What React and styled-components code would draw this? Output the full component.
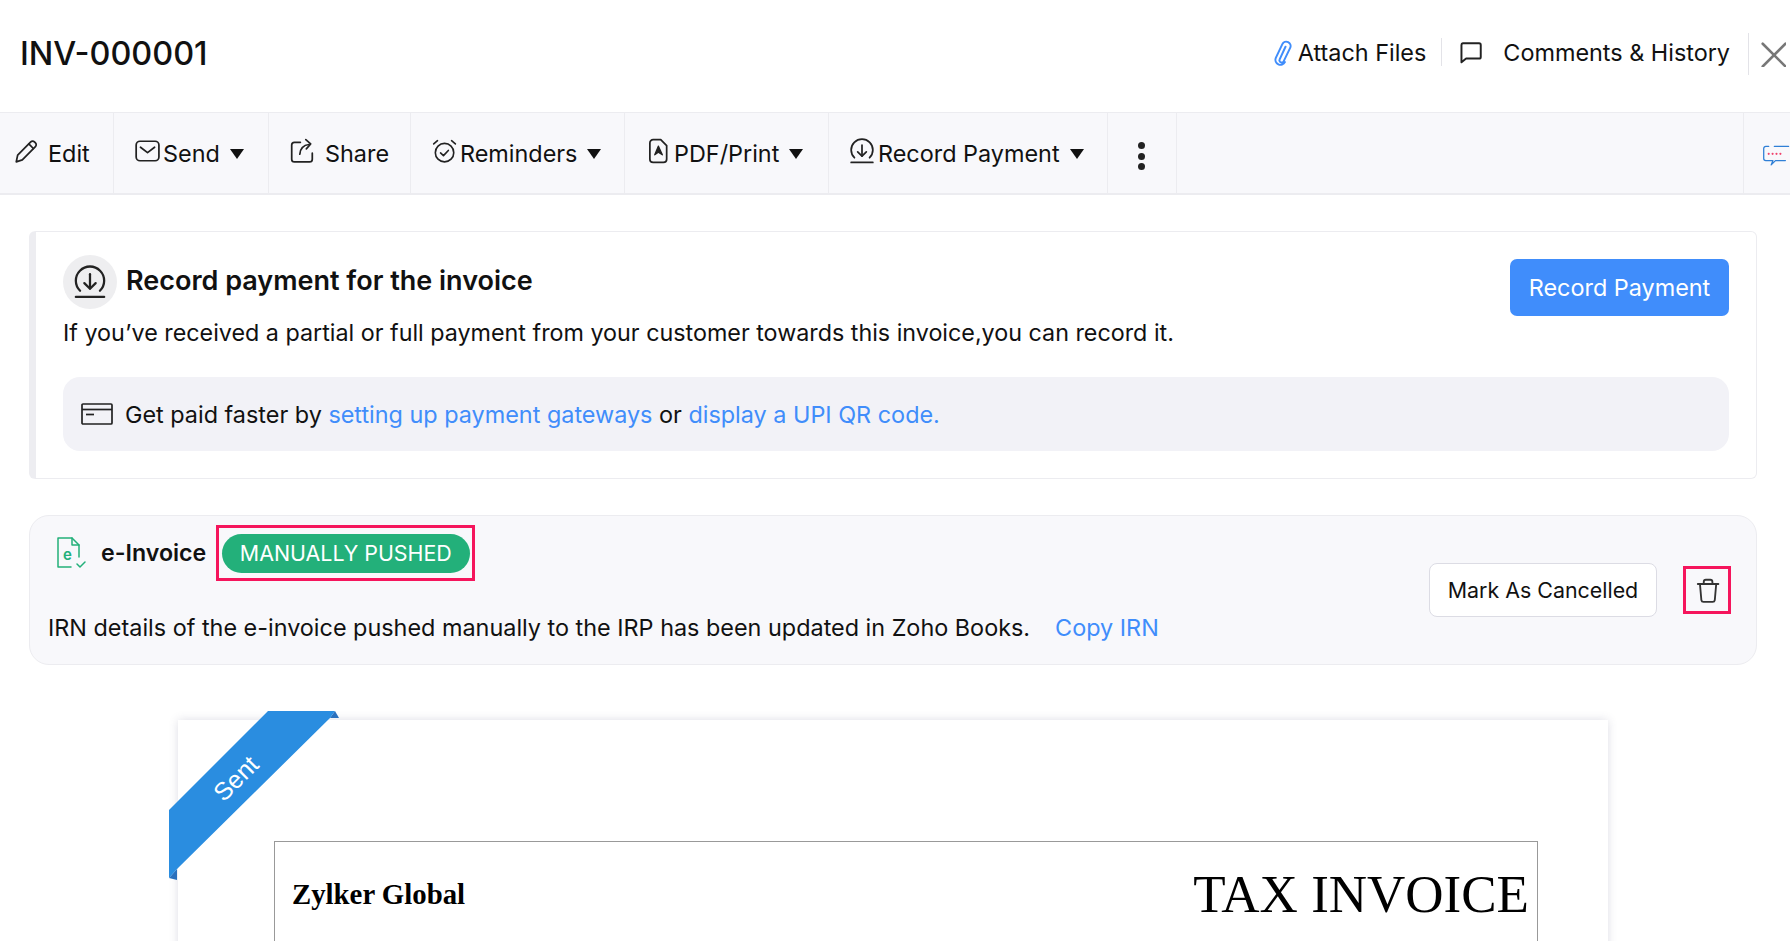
import React from "react";
import styled, { createGlobalStyle } from "styled-components";

const GlobalStyle = createGlobalStyle`
  html, body {
    margin: 0;
    padding: 0;
    background: #fff;
    overflow: hidden;
  }
  body {
    font-family: Inter, "Liberation Sans", sans-serif;
    color: #111;
  }
  * { box-sizing: border-box; }
`;

const Stroke = ({ size = 24, color = "#222", sw = 1.6, children, vb = "0 0 24 24" }) => (
  <svg width={size} height={size} viewBox={vb} fill="none" stroke={color} strokeWidth={sw} strokeLinecap="round" strokeLinejoin="round">
    {children}
  </svg>
);

const ClipIcon = () => (
  <Stroke size={28} color="#408dfb" sw={1.7}>
    <path d="M15 7.5l-5 10.800a1.900 1.900 0 0 0 3.400 1.700L19 8.500a3.700 3.700 0 0 0-6.700-3.200L6.700 17a4.300 4.300 0 0 0 7.800 3.600" />
  </Stroke>
);

const CommentIcon = () => (
  <Stroke size={26} color="#222" sw={1.8}>
    <path d="M4.500 4h15a1.500 1.500 0 0 1 1.500 1.500v11a1.500 1.500 0 0 1-1.500 1.500H7.500L3.200 21.500V5.500A1.500 1.500 0 0 1 4.500 4z" />
  </Stroke>
);

const CloseIcon = () => (
  <Stroke size={26} color="#777" sw={2.400}>
    <path d="M2.500 2.500l21 21" />
    <path d="M23.500 2.500l-21 21" />
  </Stroke>
);

const EditIcon = () => (
  <Stroke size={26}>
    <path d="M3 22l1.300-6.200L16.400 3.600a2.400 2.400 0 0 1 3.400 0l.9.900a2.400 2.400 0 0 1 0 3.400L8.600 20.200 3 22z" />
    <path d="M14.600 5.500l4.200 4.200" />
  </Stroke>
);

const MailIcon = () => (
  <Stroke size={26}>
    <rect x="2" y="3" width="21" height="18" rx="3.500" />
    <path d="M6 8.500l6.500 5 6.500-5" />
  </Stroke>
);

const ShareIcon = () => (
  <Stroke size={26}>
    <path d="M10.500 4H5a2.500 2.500 0 0 0-2.500 2.500v13A2.500 2.500 0 0 0 5 22h14a2.500 2.500 0 0 0 2.500-2.500V14" />
    <path d="M10 15c.4-5 3.500-8.500 8.500-9" />
    <path d="M15.500 1.500l4.500 4-4 4.500" />
  </Stroke>
);

const AlarmIcon = () => (
  <Stroke size={26} sw={1.500}>
    <circle cx="12.500" cy="13.500" r="8.500" />
    <path d="M8.800 13.800l2.700 2.500 4.500-4.800" />
    <path d="M2.500 5.500L6 2.500" />
    <path d="M22.500 5.500L19 2.500" />
  </Stroke>
);

const PdfIcon = () => (
  <Stroke size={26}>
    <path d="M7.500 1.500h7l5.500 5.500v12.500a3 3 0 0 1-3 3H7.500a3 3 0 0 1-3-3v-15a3 3 0 0 1 3-3z" />
    <path d="M12.300 7.500l-3.300 8 3.300-2.300 3.700 2.300z" fill="#222" strokeWidth="1.200" />
  </Stroke>
);

const DownloadIcon = ({ size = 26, sw = 1.600 }) => (
  <Stroke size={size} sw={sw}>
    <path d="M5 18.200a10 10 0 1 1 14 0" />
    <path d="M12 6.500v10" />
    <path d="M8 12.800l4 4 4-4" />
    <path d="M2 22.500h20" />
  </Stroke>
);

const ChatIcon = () => (
  <svg width="38" height="30" viewBox="0 0 38 30" fill="none" strokeLinecap="round" strokeLinejoin="round">
    <path d="M8 1.500H4a3 3 0 0 0-3 3v14a3 3 0 0 0 3 3h10l-2.500 6 6-6h14" stroke="#2f7fd6" strokeWidth="1.800" />
    <path d="M16 1.500h20" stroke="#2f7fd6" strokeWidth="1.800" />
    <circle cx="8" cy="12" r="1.500" fill="#f0416c" />
    <circle cx="13.500" cy="12" r="1.500" fill="#f0416c" />
    <circle cx="19" cy="12" r="1.500" fill="#f0416c" />
    <circle cx="24.500" cy="12" r="1.500" fill="#f0416c" />
  </svg>
);

const CardIcon = () => (
  <svg width="32" height="24" viewBox="0 0 32 24" fill="none" stroke="#222" strokeWidth="1.700">
    <rect x="1" y="2" width="30" height="20" rx="1" />
    <path d="M1 7.500h30" />
    <path d="M5 12.500h8" />
  </svg>
);

const EInvoiceIcon = () => (
  <svg width="32" height="34" viewBox="0 0 32 34" fill="none" stroke="#23b07a" strokeWidth="1.500" strokeLinecap="round" strokeLinejoin="round">
    <path d="M16 31H3V2h14l7 7v12" />
    <path d="M17 2v7h7" />
    <text x="8" y="24" fontFamily="Inter, sans-serif" fontSize="15" fontWeight="600" fill="#23b07a" stroke="none">e</text>
    <path d="M22 28l3 3 5-5" />
  </svg>
);

const TrashIcon = () => (
  <Stroke size={26} color="#333" sw={1.700}>
    <path d="M3.500 6.500h19" />
    <path d="M9 6.500V4.500a2 2 0 0 1 2-2h4a2 2 0 0 1 2 2v2" />
    <path d="M5.500 6.500l1.300 14.800a2 2 0 0 0 2 1.700h8.400a2 2 0 0 0 2-1.700L20.500 6.500" />
  </Stroke>
);

const Page = styled.div`
  width: 1790px;
  height: 941px;
  overflow: hidden;
  background: #fff;
`;

const Header = styled.header`
  height: 112px;
  display: flex;
  align-items: center;
  padding: 0 4px 8px 20px;
`;

const Title = styled.h1`
  margin: 3px auto 0 0;
  font-size: 32.4px;
  font-weight: 500;
`;

const HeaderLink = styled.div`
  display: flex;
  align-items: center;
  gap: ${(p) => p.$gap}px;
  font-size: 23.4px;
  padding-right: ${(p) => p.$right}px;
`;

const HeaderRule = styled.span`
  width: 1px;
  height: ${(p) => p.$h}px;
  background: #e3e3e8;
  margin: ${(p) => p.$top || 0}px ${(p) => p.$right}px 0 0;
`;

const CloseSlot = styled.span`
  display: flex;
  margin-top: 4px;
`;

const Toolbar = styled.nav`
  height: 83px;
  display: flex;
  background: #f8f8fb;
  border-top: 1px solid #ececf0;
  border-bottom: 2px solid #ececf0;
  overflow: hidden;
`;

const ToolCell = styled.div`
  width: ${(p) => p.$w}px;
  flex: none;
  display: flex;
  align-items: center;
  padding-left: ${(p) => p.$pad}px;
  border-right: 1px solid #ececf0;
  font-size: 23.4px;
  gap: ${(p) => p.$gap ?? 3}px;
  & > svg {
    flex: none;
    margin-bottom: 5px;
  }
`;

const ToolSpacer = styled.div`
  flex: 1;
  border-right: 1px solid #ececf0;
`;

const ToolEnd = styled.div`
  flex: none;
  width: 46px;
  padding: 6px 0 0 19px;
  display: flex;
  align-items: center;
`;

const Caret = styled.span`
  width: 0;
  height: 0;
  margin: 2px 0 0 7px;
  border-left: 7.500px solid transparent;
  border-right: 7.500px solid transparent;
  border-top: 10px solid #111;
`;

const Dots = styled.span`
  display: flex;
  flex-direction: column;
  gap: 3.500px;
  margin-top: 6px;
  & > i {
    width: 7px;
    height: 7px;
    border-radius: 50%;
    background: #222;
  }
`;

const Main = styled.main`
  padding: 36px 33px 0 29px;
`;

const PaymentCard = styled.section`
  height: 248px;
  display: flex;
  flex-direction: column;
  padding: 23px 27px 0 27px;
  border: 1px solid #ececf0;
  border-left: 7px solid #ededf1;
  border-radius: 6px;
`;

const PaymentTop = styled.div`
  display: flex;
  justify-content: space-between;
  align-items: flex-start;
`;

const HeadingRow = styled.div`
  display: flex;
  align-items: center;
  gap: 9px;
`;

const IconCircle = styled.span`
  width: 54px;
  height: 54px;
  border-radius: 50%;
  background: #eeeef0;
  display: flex;
  align-items: center;
  justify-content: center;
`;

const Heading = styled.h2`
  margin: 0 0 4px;
  font-size: 27px;
  font-weight: 600;
`;

const BodyText = styled.p`
  margin: 7px 0 0;
  font-size: 23.300px;
  line-height: 34px;
`;

const PrimaryButton = styled.button`
  width: 219px;
  height: 57px;
  margin-top: 4px;
  border: 0;
  border-radius: 7px;
  background: #408dfb;
  color: #fff;
  font: 400 23.400px Inter, sans-serif;
`;

const GatewayBox = styled.div`
  height: 74px;
  margin-top: 27px;
  display: flex;
  align-items: center;
  gap: 12px;
  padding-left: 18px;
  background: #f2f2f7;
  border-radius: 17px;
  font-size: 23.400px;
`;

const Link = styled.a`
  color: #408dfb;
`;

const InvoiceCard = styled.section`
  height: 150px;
  margin-top: 36px;
  padding: 9px 25px 0 18px;
  display: flex;
  justify-content: space-between;
  background: #f8f8fb;
  border: 1px solid #ececf0;
  border-radius: 20px;
`;

const InvoiceLeft = styled.div`
  display: flex;
  flex-direction: column;
`;

const InvoiceTitleRow = styled.div`
  display: flex;
  align-items: center;
  height: 56px;
`;

const InvoiceIconWrap = styled.span`
  display: flex;
  margin: 0 14px 0 7px;
`;

const InvoiceName = styled.strong`
  font-size: 23.200px;
  font-weight: 600;
`;

const Highlight = styled.div`
  display: flex;
  align-items: center;
  justify-content: center;
  border: 3px solid #f5155c;
  width: ${(p) => p.$w}px;
  height: ${(p) => p.$h}px;
  margin-left: ${(p) => p.$left}px;
`;

const Pill = styled.span`
  width: 248px;
  height: 39px;
  border-radius: 20px;
  background: #23b07a;
  color: #fff;
  font-size: 21.400px;
  display: flex;
  align-items: center;
  justify-content: center;
`;

const InvoiceNote = styled.p`
  margin: 30px 0 0;
  font-size: 23.400px;
  line-height: 34px;
`;

const CopyLink = styled(Link)`
  margin-left: 25px;
`;

const InvoiceActions = styled.div`
  display: flex;
  align-items: center;
  padding-bottom: 9px;
`;

const GhostButton = styled.button`
  width: 228px;
  height: 54px;
  background: #fff;
  border: 1px solid #dcdce4;
  border-radius: 8px;
  color: #111;
  font: 400 21.400px Inter, sans-serif;
`;

const Sheet = styled.article`
  position: relative;
  width: 1430px;
  height: 400px;
  margin: 55px 0 0 149px;
  padding: 121px 70px 0 96px;
  background: #fff;
  box-shadow: 0 0 9px rgba(70, 70, 110, 0.18);
`;

const Ribbon = styled.div`
  position: absolute;
  left: -9px;
  top: -9px;
  width: 172px;
  height: 172px;
`;

const RibbonLabel = styled.span`
  position: absolute;
  left: 37px;
  top: 53px;
  width: 60px;
  text-align: center;
  color: #fff;
  font: 400 25px "Liberation Sans", Arial, sans-serif;
  transform: rotate(-45deg);
`;

const InvoiceTable = styled.div`
  height: 300px;
  display: flex;
  justify-content: space-between;
  align-items: flex-start;
  padding: 22px 8px 0 17px;
  border: 1px solid #999;
  font-family: "Liberation Serif", "Times New Roman", serif;
  color: #000;
`;

const Company = styled.div`
  font-size: 28.800px;
  font-weight: 700;
  margin-top: 14px;
`;

const DocTitle = styled.div`
  font-size: 53px;
`;

const tools = [
  { label: "Edit", w: 114, pad: 13, gap: 9, icon: <EditIcon /> },
  { label: "Send", w: 155, pad: 20, caret: true, icon: <MailIcon /> },
  { label: "Share", w: 142, pad: 20, gap: 10, icon: <ShareIcon /> },
  { label: "Reminders", w: 214, pad: 20, caret: true, icon: <AlarmIcon /> },
  { label: "PDF/Print", w: 204, pad: 20, caret: true, icon: <PdfIcon /> },
  { label: "Record Payment", w: 279, pad: 20, caret: true, icon: <DownloadIcon /> },
];

export default function App() {
  return (
    <Page>
      <GlobalStyle />
      <Header>
        <Title>INV-000001</Title>
        <HeaderLink $gap={2} $right={15}>
          <ClipIcon />
          Attach Files
        </HeaderLink>
        <HeaderRule $h={28} $right={16} />
        <HeaderLink $gap={19} $right={18}>
          <CommentIcon />
          Comments &amp; History
        </HeaderLink>
        <HeaderRule $h={42} $right={11} $top={4} />
        <CloseSlot>
          <CloseIcon />
        </CloseSlot>
      </Header>

      <Toolbar>
        {tools.map((t) => (
          <ToolCell key={t.label} $w={t.w} $pad={t.pad} $gap={t.gap}>
            {t.icon}
            {t.label}
            {t.caret && <Caret />}
          </ToolCell>
        ))}
        <ToolCell $w={69} $pad={30}>
          <Dots>
            <i />
            <i />
            <i />
          </Dots>
        </ToolCell>
        <ToolSpacer />
        <ToolEnd>
          <ChatIcon />
        </ToolEnd>
      </Toolbar>

      <Main>
        <PaymentCard>
          <PaymentTop>
            <div>
              <HeadingRow>
                <IconCircle>
                  <DownloadIcon size={34} sw={1.600} />
                </IconCircle>
                <Heading>Record payment for the invoice</Heading>
              </HeadingRow>
              <BodyText>
                If you’ve received a partial or full payment from your customer towards this invoice,you can record it.
              </BodyText>
            </div>
            <PrimaryButton>Record Payment</PrimaryButton>
          </PaymentTop>
          <GatewayBox>
            <CardIcon />
            <span>
              Get paid faster by <Link>setting up payment gateways</Link> or <Link>display a UPI QR code.</Link>
            </span>
          </GatewayBox>
        </PaymentCard>

        <InvoiceCard>
          <InvoiceLeft>
            <InvoiceTitleRow>
              <InvoiceIconWrap>
                <EInvoiceIcon />
              </InvoiceIconWrap>
              <InvoiceName>e-Invoice</InvoiceName>
              <Highlight $left={10} $w={259} $h={56}>
                <Pill>MANUALLY PUSHED</Pill>
              </Highlight>
            </InvoiceTitleRow>
            <InvoiceNote>
              IRN details of the e-invoice pushed manually to the IRP has been updated in Zoho Books.
              <CopyLink>Copy IRN</CopyLink>
            </InvoiceNote>
          </InvoiceLeft>
          <InvoiceActions>
            <GhostButton>Mark As Cancelled</GhostButton>
            <Highlight $left={26} $w={48} $h={48}>
              <TrashIcon />
            </Highlight>
          </InvoiceActions>
        </InvoiceCard>

        <Sheet>
          <Ribbon>
            <svg width="172" height="172" viewBox="0 0 172 172">
              <polygon points="161,7 170,7 166,0" fill="#2a70bd" />
              <polygon points="0,167 8,169 8,158" fill="#2a70bd" />
              <polygon points="99,0 166,0 161,7 8,158 0,167 0,99" fill="#2a8de0" />
            </svg>
            <RibbonLabel>Sent</RibbonLabel>
          </Ribbon>
          <InvoiceTable>
            <Company>Zylker Global</Company>
            <DocTitle>TAX INVOICE</DocTitle>
          </InvoiceTable>
        </Sheet>
      </Main>
    </Page>
  );
}
